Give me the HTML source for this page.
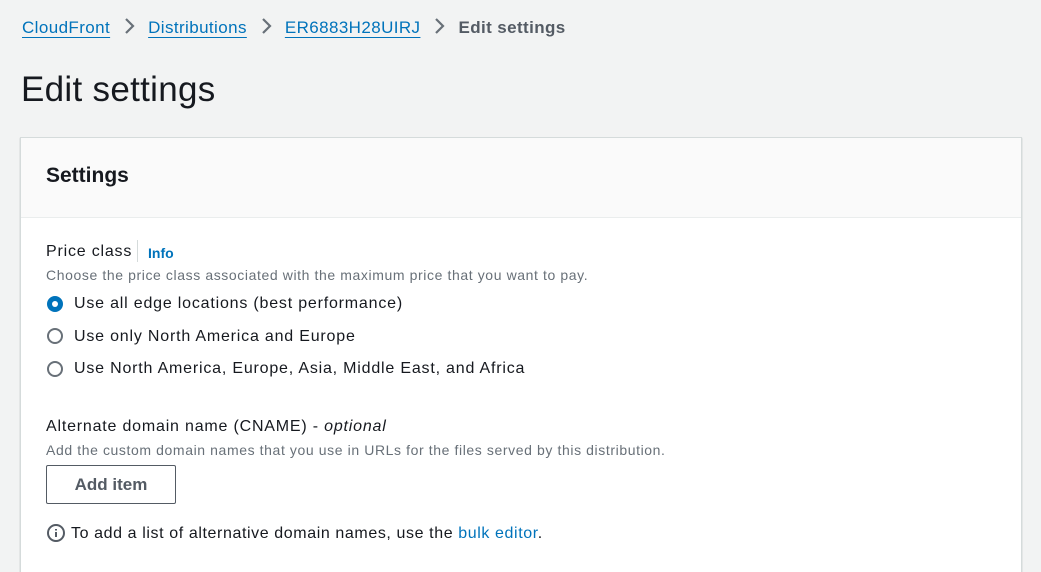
<!DOCTYPE html>
<html><head><style>
html,body{margin:0;width:1041px;height:572px;overflow:hidden}
body{background:#f2f3f3;font-family:"Liberation Sans",sans-serif;color:#16191f;position:relative}
.a{position:absolute;white-space:nowrap}
.bc{top:17px;left:22px;font-size:17px;color:#0073bb;letter-spacing:.4px}
.bc a{color:#0073bb;text-decoration:underline;text-underline-offset:4px}
.bc svg{display:inline-block;vertical-align:-2px;margin:0 12px}
.bc b{color:#545b64}
h1{position:absolute;margin:0;top:70px;left:21px;font-weight:400;font-size:35px;letter-spacing:.3px}
.panel{position:absolute;left:20px;top:137px;width:1000px;height:460px;background:#fff;border:1px solid #d5dbdb;box-shadow:0 1px 1px rgba(0,28,36,.3)}
.hd{height:79px;background:#fafafa;border-bottom:1px solid #eaeded}
.t16{font-size:16px;letter-spacing:.8px}
.t14{font-size:14px;color:#687078;letter-spacing:.6px}
</style></head><body>
<div class="a bc"><a>CloudFront</a><svg width="14" height="18" viewBox="0 0 14 18"><path d="M4 2l7 7-7 7" fill="none" stroke="#687078" stroke-width="2.2"/></svg><a>Distributions</a><svg width="14" height="18" viewBox="0 0 14 18"><path d="M4 2l7 7-7 7" fill="none" stroke="#687078" stroke-width="2.2"/></svg><a>ER6883H28UIRJ</a><svg width="14" height="18" viewBox="0 0 14 18"><path d="M4 2l7 7-7 7" fill="none" stroke="#687078" stroke-width="2.2"/></svg><b>Edit settings</b></div>
<h1>Edit settings</h1>
<div class="panel"><div class="hd"></div></div>
<div class="a" style="left:46px;top:164px;font-size:21px;font-weight:700">Settings</div>
<div class="a t16" style="left:46px;top:243px">Price class</div>
<div class="a" style="left:137px;top:240px;height:22px;border-left:1px solid #d5dbdb"></div>
<div class="a" style="left:148px;top:245px;font-size:14px;font-weight:700;color:#0073bb">Info</div>
<div class="a t14" style="left:46px;top:267px">Choose the price class associated with the maximum price that you want to pay.</div>
<div class="a" style="left:47px;top:296px;width:16px;height:16px;border-radius:50%;background:#0073bb"><div style="margin:5px;width:6px;height:6px;border-radius:50%;background:#fff"></div></div>
<div class="a t16" style="left:74px;top:295px">Use all edge locations (best performance)</div>
<div class="a" style="left:47px;top:328px;width:16px;height:16px;border-radius:50%;border:2px solid #687078;box-sizing:border-box"></div>
<div class="a t16" style="left:74px;top:328px">Use only North America and Europe</div>
<div class="a" style="left:47px;top:361px;width:16px;height:16px;border-radius:50%;border:2px solid #687078;box-sizing:border-box"></div>
<div class="a t16" style="left:74px;top:360px">Use North America, Europe, Asia, Middle East, and Africa</div>
<div class="a t16" style="left:46px;top:418px">Alternate domain name (CNAME) - <i>optional</i></div>
<div class="a t14" style="left:46px;top:442px">Add the custom domain names that you use in URLs for the files served by this distribution.</div>
<div class="a" style="left:46px;top:465px;width:130px;height:39px;border:1px solid #545b64;border-radius:2px;box-sizing:border-box;text-align:center;line-height:37px;font-size:17px;font-weight:700;color:#545b64">Add item</div>
<svg class="a" style="left:46px;top:523px" width="20" height="20" viewBox="0 0 20 20"><circle cx="10" cy="10" r="8" fill="none" stroke="#545b64" stroke-width="2"/><path d="M10 9v5M10 6v1.5" stroke="#545b64" stroke-width="2"/></svg>
<div class="a t16" style="left:71px;top:525px;letter-spacing:.6px">To add a list of alternative domain names, use the <span style="color:#0073bb">bulk editor</span>.</div>
</body></html>
